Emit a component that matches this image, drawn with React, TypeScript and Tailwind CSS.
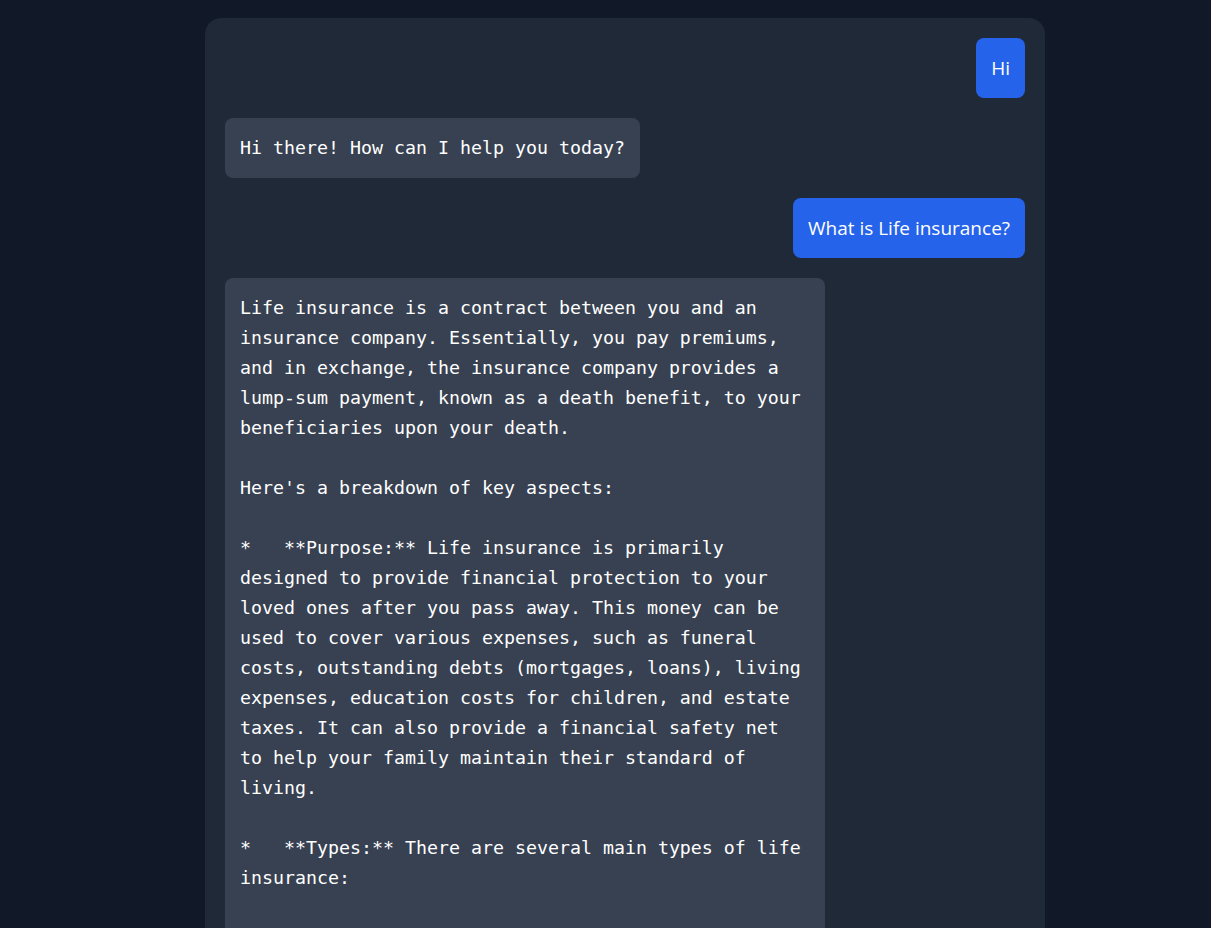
const messages: { role: "user" | "assistant"; text: string }[] = [
  { role: "user", text: "Hi" },
  { role: "assistant", text: "Hi there! How can I help you today?" },
  { role: "user", text: "What is Life insurance?" },
  {
    role: "assistant",
    text: `Life insurance is a contract between you and an insurance company. Essentially, you pay premiums, and in exchange, the insurance company provides a lump-sum payment, known as a death benefit, to your beneficiaries upon your death.

Here's a breakdown of key aspects:

*   **Purpose:** Life insurance is primarily designed to provide financial protection to your loved ones after you pass away. This money can be used to cover various expenses, such as funeral costs, outstanding debts (mortgages, loans), living expenses, education costs for children, and estate taxes. It can also provide a financial safety net to help your family maintain their standard of living.

*   **Types:** There are several main types of life insurance:

    *   **Term Life Insurance:** Provides coverage for a specific period (e.g., 10, 20, or 30 years).`,
  },
];

export default function App() {
  return (
    <div className="flex min-h-screen justify-center bg-[#111827] pl-[39px] pt-[18px]">
      <div className="flex w-[840px] flex-col gap-5 self-start rounded-2xl bg-[#1f2937] p-5">
        {messages.map((m, i) =>
          m.role === "user" ? (
            <div className="flex justify-end" key={i}>
              <div className="rounded-lg bg-[#2563eb] px-[15px] py-[15px] font-['Open_Sans',sans-serif] text-[19px] leading-[30px] text-white">
                {m.text}
              </div>
            </div>
          ) : (
            <div className="flex justify-start" key={i}>
              <div className="max-w-[75%] whitespace-pre-wrap rounded-lg bg-[#374151] p-[15px] font-['DejaVu_Sans_Mono',monospace] text-[18.27px] leading-[30px] text-white">
                {m.text}
              </div>
            </div>
          )
        )}
      </div>
    </div>
  );
}
